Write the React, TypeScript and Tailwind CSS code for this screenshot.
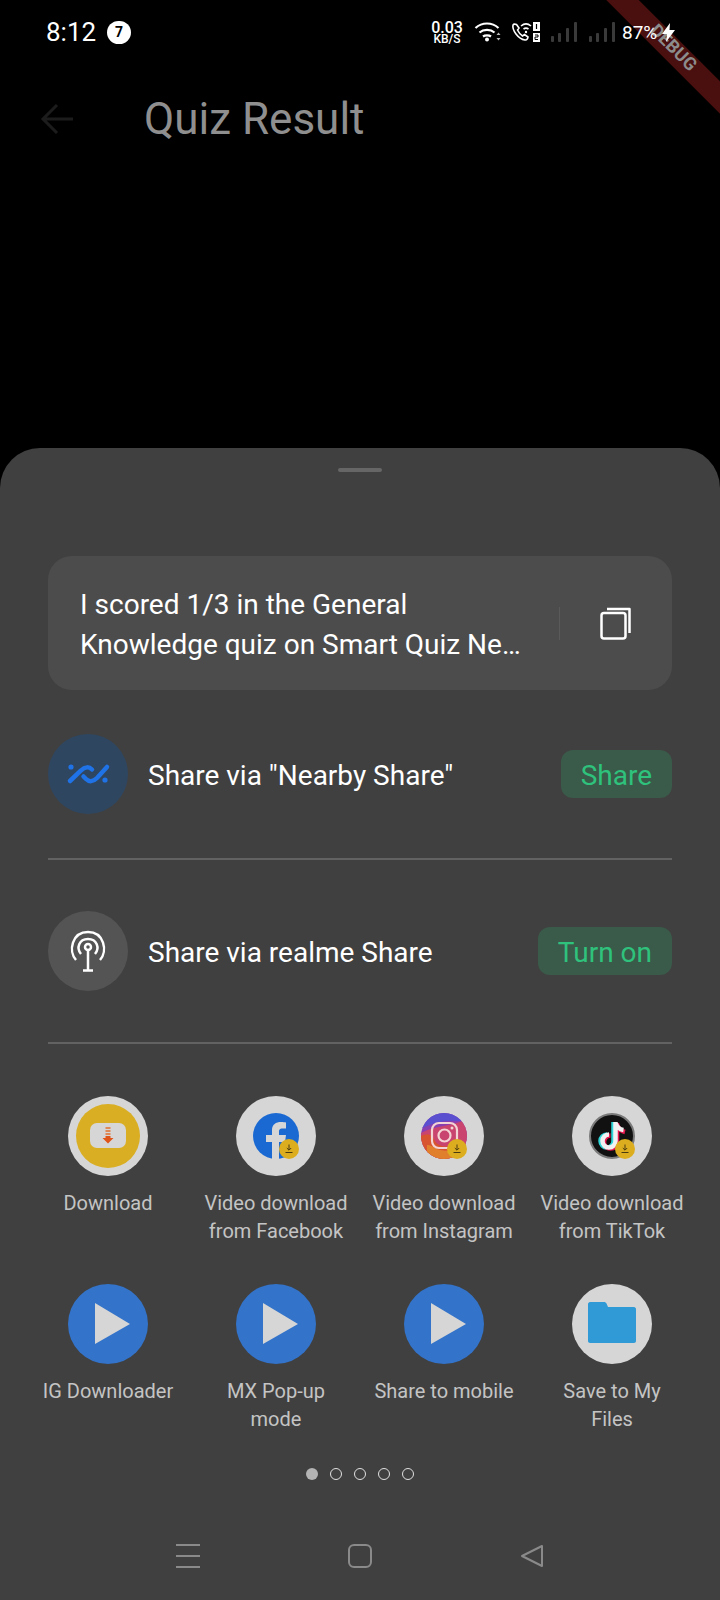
import React from "react";

const font = "font-['Roboto',sans-serif]";

const DownloadBadge = () => (
  <div className="absolute left-[43px] top-[43px] flex h-[20px] w-[20px] items-center justify-center rounded-full bg-[#dcae1f]">
    <svg width="10" height="10" viewBox="0 0 10 10" fill="none" stroke="#4a3a10" strokeWidth="1">
      <path d="M5 0.5V6M2.8 4L5 6.2L7.2 4M1.5 8.5H8.5" />
    </svg>
  </div>
);

const IconCircle = ({ children }: { children: React.ReactNode }) => (
  <div className="relative flex h-[80px] w-[80px] items-center justify-center rounded-full bg-[#d6d6d6]">
    {children}
  </div>
);

const DownloadIcon = () => (
  <IconCircle>
    <div className="flex h-[64px] w-[64px] items-center justify-center rounded-full bg-[#d9ae22]">
      <svg width="36" height="26" viewBox="0 0 36 26">
        <rect x="0" y="0" width="36" height="25" rx="7" fill="#d6d6d6" />
        <path d="M15.5 5h5M15.5 8h5M15.5 11h5" stroke="#e2702c" strokeWidth="1.6" />
        <path d="M15.5 13h5v2h3l-5.5 5.5L12.500 15h3z" fill="#e0561a" />
      </svg>
    </div>
  </IconCircle>
);

const FacebookIcon = () => (
  <IconCircle>
    <svg width="46" height="46" viewBox="0 0 46 46">
      <circle cx="23" cy="23" r="23" fill="#1a69d2" />
      <path d="M19 46V29h-6v-7h6v-5c0-5.500 4-8 9-8 2 0 4 .3 5 .5v6h-3.500c-3 0-3.500 1.500-3.500 3.500V22h7l-1 7h-6v17z" fill="#d6d6d6" />
    </svg>
    <DownloadBadge />
  </IconCircle>
);

const InstagramIcon = () => (
  <IconCircle>
    <svg width="46" height="46" viewBox="0 0 46 46">
      <defs>
        <clipPath id="ig-clip">
          <circle cx="23" cy="23" r="23" />
        </clipPath>
      </defs>
      <g clipPath="url(#ig-clip)">
        <rect width="46" height="46" fill="#8a3fb0" />
        <path d="M0 0h46v9C30 6 14 8 0 16z" fill="#5a4fcf" />
        <path d="M0 20C14 12 30 14 46 6v40H0z" fill="#c9446e" />
        <path d="M0 23C8 20 12 22 14 28c2 6 16 8 32 2v16H0z" fill="#d8532f" />
        <path d="M6 32c4 0 6 2 10 4 8 3 20 2 30-2v12H6z" fill="#e0802c" />
      </g>
      <rect x="11" y="10" width="25" height="25" rx="7" fill="none" stroke="#f3d4d4" strokeWidth="2.200" />
      <circle cx="23.500" cy="22.500" r="6" fill="none" stroke="#f3d4d4" strokeWidth="2.200" />
      <circle cx="31" cy="15" r="1.500" fill="#f3d4d4" />
    </svg>
    <DownloadBadge />
  </IconCircle>
);

const TiktokIcon = () => (
  <IconCircle>
    <svg width="46" height="46" viewBox="0 0 46 46">
      <circle cx="23" cy="23" r="22" fill="#111" stroke="#7a7a7a" strokeWidth="2" />
      <path d="M24.500 9v19a6.500 6.500 0 1 1-6.500-6.500" fill="none" stroke="#2fd6d8" strokeWidth="4.500" />
      <path d="M28 10v19a6.500 6.500 0 1 1-6.500-6.500M28 11c1 4 4 7 8 8" fill="none" stroke="#e8184f" strokeWidth="4.500" />
      <path d="M26.500 9v19a6.500 6.500 0 1 1-6.500-6.500M26.500 9.500c1 4 4 7 8 7.500" fill="none" stroke="#f2f2f2" strokeWidth="4.500" />
    </svg>
    <DownloadBadge />
  </IconCircle>
);

const PlayIcon = () => (
  <div className="flex h-[80px] w-[80px] items-center justify-center rounded-full bg-[#3373c9]">
    <svg className="ml-[9px]" width="36" height="42" viewBox="0 0 36 42">
      <path d="M0 0L35 21L0 41z" fill="#d6d6d6" />
    </svg>
  </div>
);

const FolderIcon = () => (
  <IconCircle>
    <svg className="mb-[3px]" width="48" height="41" viewBox="0 0 48 41">
      <path d="M2 0h14c1 0 2 .5 2.500 1.500L20 5h26c1 0 2 1 2 2v32c0 1-1 2-2 2H2c-1 0-2-1-2-2V2c0-1 1-2 2-2z" fill="#2f9ad6" />
    </svg>
  </IconCircle>
);

const apps = [
  { icon: <DownloadIcon />, lines: ["Download"] },
  { icon: <FacebookIcon />, lines: ["Video download", "from Facebook"] },
  { icon: <InstagramIcon />, lines: ["Video download", "from Instagram"] },
  { icon: <TiktokIcon />, lines: ["Video download", "from TikTok"] },
  { icon: <PlayIcon />, lines: ["IG Downloader"] },
  { icon: <PlayIcon />, lines: ["MX Pop-up", "mode"] },
  { icon: <PlayIcon />, lines: ["Share to mobile"] },
  { icon: <FolderIcon />, lines: ["Save to My", "Files"] },
];

const SignalBars = () => (
  <svg width="26" height="20" viewBox="0 0 26 20" fill="#3a3a3a">
    <rect x="0" y="14" width="3" height="6" rx="1" />
    <rect x="7" y="11" width="3" height="9" rx="1" />
    <rect x="15" y="6" width="3" height="14" rx="1" />
    <rect x="23" y="0" width="3" height="20" rx="1" />
  </svg>
);

const StatusBar = () => (
  <div className="relative z-10 flex h-[64px] items-center pl-[46px] pr-[45px] text-white">
    <span className="text-[26px] leading-none">8:12</span>
    <div className="ml-[11px] flex h-[23px] w-[24px] items-center justify-center rounded-full bg-white text-[14px] font-bold text-black">
      7
    </div>
    <div className="ml-auto flex items-center">
      <div className="flex w-[34px] flex-col items-center leading-none">
        <span className="text-[16px] font-medium leading-[13px]">0.03</span>
        <span className="text-[12px] font-medium leading-[10px]">KB/S</span>
      </div>
      <svg className="ml-[10px]" width="28" height="20" viewBox="0 0 28 20" fill="none" stroke="#fff" strokeWidth="2.200">
        <path d="M1.500 6C8 0 18 0 24.500 6M5.500 10.500C9.500 7 16.500 7 20.500 10.500M9 14.500C11 13 15 13 17 14.500" />
        <circle cx="13" cy="17.500" r="2" fill="#fff" stroke="none" />
        <path d="M24.500 10.500l-2 2.500h4zM22.500 16l2 2.500 2-2.500z" fill="#bbb" stroke="none" />
      </svg>
      <svg className="ml-[9px]" width="29" height="20" viewBox="0 0 29 20" fill="none" stroke="#fff" strokeWidth="1.600">
        <path d="M2 3c-1 5 5 14 12 15 2 .3 3-2 3-3l-3.500-2.500-2 1.500c-2-1-4-4-5-6l1.500-2L5.500 2.500C4 2 2.500 2 2 3z" />
        <path d="M10 4c3-2.500 7-2.500 10 0M12.500 7c1.600-1.200 3.400-1.200 5 0" />
        <circle cx="15" cy="10" r="1.200" fill="#fff" stroke="none" />
        <rect x="22" y="0" width="7" height="9" fill="#fff" stroke="none" />
        <rect x="22" y="11" width="7" height="9" fill="#fff" stroke="none" />
        <path d="M25.500 2v5" stroke="#000" strokeWidth="1.200" />
        <path d="M24 13h3v2h-3v2.500h3" stroke="#000" strokeWidth="1" />
      </svg>
      <div className="ml-[11px]">
        <SignalBars />
      </div>
      <div className="ml-[12px]">
        <SignalBars />
      </div>
      <span className="ml-[7px] w-[35px] text-[19px] leading-none">87%</span>
      <svg className="ml-[5px]" width="13" height="19" viewBox="0 0 13 19" fill="#fff">
        <path d="M8 0L0 11h5l-1 8 9-12H7.500z" />
      </svg>
    </div>
  </div>
);

const ShareRow = ({
  icon,
  iconBg,
  label,
  action,
}: {
  icon: React.ReactNode;
  iconBg: string;
  label: string;
  action: string;
}) => (
  <div className="flex h-[80px] items-center">
    <div className={`flex h-[80px] w-[80px] items-center justify-center rounded-full ${iconBg}`}>{icon}</div>
    <span className="ml-[20px] pt-[3px] text-[28px] text-white">{label}</span>
    <div className="ml-auto flex h-[48px] items-center rounded-[12px] bg-[#3a5a4a] px-[20px] pt-[3px] text-[28px] text-[#2fc27c]">
      {action}
    </div>
  </div>
);

export default function App() {
  return (
    <div className={`relative flex h-[1600px] w-[720px] flex-col overflow-hidden bg-black ${font}`}>
      <StatusBar />
      <div className="flex h-[384px] items-start">
        <div className="flex h-[110px] items-center pl-[40px]">
          <svg width="34" height="32" viewBox="0 0 34 32" fill="none" stroke="#1c1c1c" strokeWidth="3">
            <path d="M33 16H3M17 2L3 16l14 14" />
          </svg>
          <span className="ml-[70px] text-[44px] text-[#8f8f8f]">Quiz Result</span>
        </div>
      </div>

      <div className="flex flex-1 flex-col rounded-t-[40px] bg-[#404040] px-[48px]">
        <div className="mx-auto mt-[20px] h-[4px] w-[44px] rounded-[2px] bg-[#666666]" />

        <div className="mt-[84px] flex h-[134px] items-center rounded-[24px] bg-[#4c4c4c] pl-[32px]">
          <div className="w-[446px] pt-[3px] text-[28px] leading-[40px] text-white">
            I scored 1/3 in the General
            <br />
            Knowledge quiz on Smart Quiz Ne…
          </div>
          <div className="ml-[33px] h-[33px] w-[1px] bg-[#5a5a5a]" />
          <svg className="ml-[40px]" width="32" height="33" viewBox="0 0 32 33" fill="none" stroke="#fff" strokeWidth="2.500">
            <rect x="1.500" y="6" width="24" height="25.500" rx="2.500" />
            <path d="M7 2h22.500v24" strokeLinejoin="round" />
          </svg>
        </div>

        <div className="mt-[44px]">
          <ShareRow
            iconBg="bg-[#2f4660]"
            label={'Share via "Nearby Share"'}
            action="Share"
            icon={
              <svg width="64" height="60" viewBox="0 0 64 60" fill="none" stroke="#1f73e6" strokeWidth="4.500" strokeLinecap="round">
                <path d="M14 37L25 26.500C29 22.500 33 22.500 36 25.500" />
                <path d="M51 23L41 34C37 38 33 38 30 35L27.500 32.500" />
                <circle cx="15" cy="23" r="2.600" fill="#1f73e6" stroke="none" />
                <circle cx="49" cy="36" r="2.600" fill="#1f73e6" stroke="none" />
              </svg>
            }
          />
        </div>
        <div className="mt-[44px] h-[2px] bg-[#626262]" />

        <div className="mt-[51px]">
          <ShareRow
            iconBg="bg-[#545454]"
            label="Share via realme Share"
            action="Turn on"
            icon={
              <svg width="38" height="42" viewBox="0 0 38 42" fill="none" stroke="#fff" strokeWidth="2.500">
                <path d="M7 30C-1 21 3 2 19 2s20 19 12 28" />
                <path d="M12 24C7 18 10 9 19 9s12 9 7 15" />
                <circle cx="19" cy="17" r="3" />
                <path d="M19 20v20M14 40.500h10" />
              </svg>
            }
          />
        </div>
        <div className="mt-[51px] h-[2px] bg-[#626262]" />

        <div className="-mx-[24px] mt-[52px] grid grid-cols-4 gap-y-[24px]">
          {apps.map((app, i) => (
            <div key={i} className="flex h-[164px] flex-col items-center">
              {app.icon}
              <div className="mt-[13px] text-center text-[20px] leading-[28px] text-[#c4c4c4]">
                {app.lines.map((line) => (
                  <div key={line}>{line}</div>
                ))}
              </div>
            </div>
          ))}
        </div>

        <div className="mt-[20px] flex justify-center gap-[12px]">
          <div className="h-[12px] w-[12px] rounded-full bg-[#b4b4b4]" />
          {[0, 1, 2, 3].map((d) => (
            <div key={d} className="h-[12px] w-[12px] rounded-full border border-[#e0e0e0]" />
          ))}
        </div>

        <div className="mt-[64px] flex justify-center gap-[148px]">
          <svg width="24" height="24" viewBox="0 0 24 24" fill="none" stroke="#8a8a8a" strokeWidth="2">
            <path d="M0 1h24M0 12h24M0 23h24" />
          </svg>
          <svg width="24" height="24" viewBox="0 0 24 24" fill="none" stroke="#8a8a8a" strokeWidth="2">
            <rect x="1" y="1" width="22" height="22" rx="5" />
          </svg>
          <svg width="24" height="24" viewBox="0 0 24 24" fill="none" stroke="#8a8a8a" strokeWidth="2" strokeLinejoin="round">
            <path d="M22 2v20L2 12z" />
          </svg>
        </div>
      </div>

      <div className="absolute right-[-54px] top-[30px] flex h-[23px] w-[220px] rotate-45 items-center justify-center bg-[#4a0f0f] pb-[6px] pl-[22px] text-[18px] font-bold text-[#8c8c8c]">
        DEBUG
      </div>
    </div>
  );
}
